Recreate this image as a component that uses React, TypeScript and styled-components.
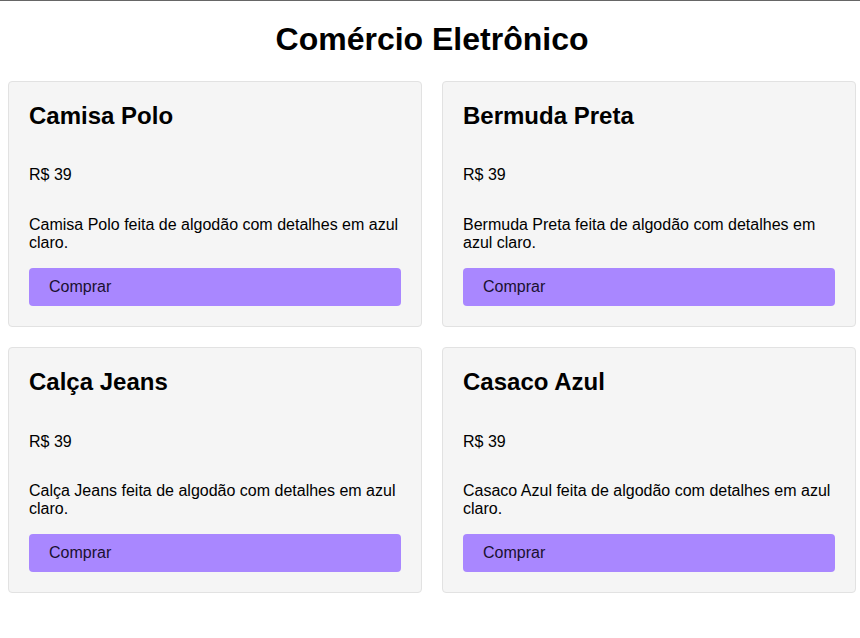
import React from "react";
import styled, { createGlobalStyle } from "styled-components";

const GlobalStyle = createGlobalStyle`
  html, body {
    margin: 0;
    padding: 0;
    background: #ffffff;
    font-family: "Liberation Sans", Arial, sans-serif;
    color: #000000;
  }
`;

const Page = styled.div`
  border-top: 1px solid #666666;
  padding: 0 4px 20px 8px;
`;

const Title = styled.h1`
  margin: 20px 0 23px;
  font-size: 32px;
  font-weight: 700;
  line-height: 36.8px;
  text-align: center;
`;

const Grid = styled.div`
  display: grid;
  grid-template-columns: 414px 414px;
  column-gap: 20px;
  row-gap: 20px;
`;

const Card = styled.div`
  display: flex;
  flex-direction: column;
  background: #f5f5f5;
  border: 1px solid #e2e2e2;
  border-radius: 4px;
  padding: 20px;
`;

const Name = styled.h2`
  margin: 0 0 21px;
  font-size: 24px;
  font-weight: 700;
  line-height: 27.6px;
`;

const Price = styled.p`
  margin: 16px 0 15px;
  font-size: 16px;
  line-height: 18.4px;
`;

const Description = styled.p`
  margin: 16px 0 15px;
  font-size: 16px;
  line-height: 18.4px;
`;

const BuyButton = styled.button`
  display: block;
  width: 100%;
  text-align: left;
  border: none;
  border-radius: 4px;
  background: #a987ff;
  color: #1a1030;
  font-family: "Liberation Sans", Arial, sans-serif;
  font-size: 16px;
  line-height: 18.4px;
  padding: 10px 20px;
  cursor: pointer;
`;

const products = ["Camisa Polo", "Bermuda Preta", "Calça Jeans", "Casaco Azul"];

export default function App() {
  return (
    <>
      <GlobalStyle />
      <Page>
        <Title>Comércio Eletrônico</Title>
        <Grid>
          {products.map((name) => (
            <Card key={name}>
              <Name>{name}</Name>
              <Price>R$ 39</Price>
              <Description>{name} feita de algodão com detalhes em azul claro.</Description>
              <BuyButton>Comprar</BuyButton>
            </Card>
          ))}
        </Grid>
      </Page>
    </>
  );
}
